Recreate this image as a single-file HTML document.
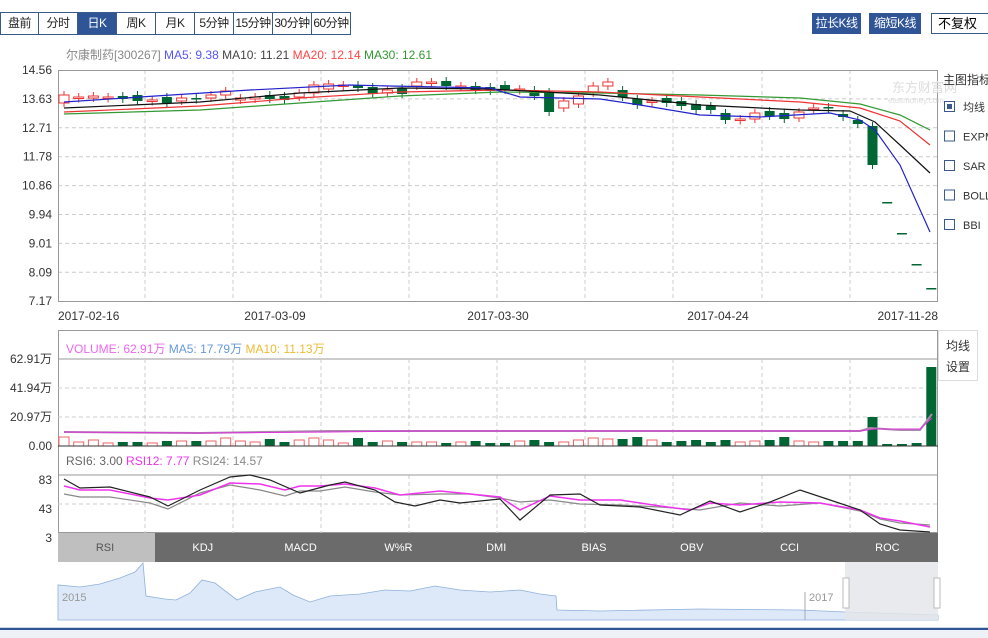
<!DOCTYPE html>
<html><head><meta charset="utf-8"><style>
body{margin:0;width:988px;height:638px;overflow:hidden;background:#fff;font-family:"Liberation Sans","Noto Sans CJK SC",sans-serif;}
.tab{position:absolute;top:12px;height:21px;border:1px solid #3b5a8c;display:flex;}
.tab div{border-right:1px solid #3b5a8c;font-size:12px;line-height:21px;text-align:center;color:#222;white-space:nowrap;overflow:hidden;letter-spacing:-0.5px}
.tab div:last-child{border-right:none}
.btn{position:absolute;top:13px;height:21px;background:#2f5597;color:#fff;font-size:12px;line-height:21px;text-align:center;white-space:nowrap;letter-spacing:-0.5px}
svg text{font-family:"Liberation Sans","Noto Sans CJK SC",sans-serif;}
</style></head><body>
<div class="tab" style="left:0">
<div style="width:37px">盘前</div><div style="width:38px">分时</div><div style="width:38px;background:#2f5597;color:#fff">日K</div><div style="width:38px">周K</div><div style="width:38px">月K</div><div style="width:38px">5分钟</div><div style="width:38px">15分钟</div><div style="width:38px">30分钟</div><div style="width:38px">60分钟</div>
</div>
<div class="btn" style="left:812px;width:49px">拉长K线</div>
<div class="btn" style="left:869px;width:52px">缩短K线</div>
<div style="position:absolute;left:931px;top:13px;width:60px;height:19px;border:1px solid #3b5a8c;font-size:13px;line-height:19px;padding-left:6px;white-space:nowrap">不复权</div>
<svg id="s" width="988" height="638" style="position:absolute;left:0;top:0"></svg>
<script>
(function(){
var s='';
function L(x1,y1,x2,y2,c,w,d){s+='<line x1="'+x1+'" y1="'+y1+'" x2="'+x2+'" y2="'+y2+'" stroke="'+c+'" stroke-width="'+(w||1)+'"'+(d?' stroke-dasharray="4,3"':'')+'/>';}
function T(x,y,t,c,sz,a){s+='<text x="'+x+'" y="'+y+'" fill="'+c+'" font-size="'+(sz||12)+'"'+(a?' text-anchor="'+a+'"':'')+'>'+t+'</text>';}
function P(pts,c,w){s+='<polyline fill="none" stroke="'+c+'" stroke-width="'+(w||1.2)+'" points="'+pts+'"/>';}
var X0=58,X1=938,vx=[145,233,321,409,497,585,673,762,850];
s+='<text x="66" y="59" font-size="12"><tspan fill="#888">尔康制药[300267]</tspan><tspan fill="#55f"> MA5: 9.38</tspan><tspan fill="#444"> MA10: 11.21</tspan><tspan fill="#f44"> MA20: 12.14</tspan><tspan fill="#393"> MA30: 12.61</tspan></text>';
var lab=['14.56','13.63','12.71','11.78','10.86','9.94','9.01','8.09','7.17'];
for(var i=0;i<9;i++){var y=70+i*28.9;T(52,y+4,lab[i],'#333',12,'end');if(i>0&&i<8)L(X0,y,X1,y,'#ccc',1,1);}
vx.forEach(function(x){L(x,70,x,301,'#ccc',1,1)});
s+='<rect x="58.5" y="70.5" width="879" height="231" fill="none" stroke="#999"/>';
T(892,92,'东方财富网','#ddd',13);T(888,103,'eastmoney.com','#ddd',8);
var c=[[103,95],[97,97],[98,96],[97,97],[96,99],[95,101],[100,100],[97,103],[101,98],[98,99],[98,95],[95,91],[100,98],[99,97],[95,99],[96,100],[97,93],[93,85],[89,84],[85,85],[85,88],[87,94],[93,90],[88,94],[86,82],[82,82],[81,86],[86,86],[86,90],[87,91],[85,90],[89,89],[90,96],[92,112],[108,101],[104,96],[93,86],[86,82],[90,97],[99,105],[101,101],[98,103],[101,106],[104,110],[106,110],[113,120],[119,119],[119,113],[111,116],[113,119],[118,112],[108,108],[107,108],[114,117],[120,124],[126,165],[202,202],[233,233],[264,264],[288,288]];
for(var i=0;i<c.length;i++){var x=64+i*14.7,o=c[i][0],cl=c[i][1],up=cl<=o;if(i>=55)up=false;var col=up?'#e33':'#063';
var tp=Math.min(o,cl),h=Math.max(Math.abs(o-cl),1.5);
if(i<56)L(x,tp-4,x,tp+h+4,col);
if(up)s+='<rect x="'+(x-5)+'" y="'+tp+'" width="10" height="'+h+'" fill="#fff" stroke="'+col+'"/>';else s+='<rect x="'+(x-5)+'" y="'+tp+'" width="10" height="'+h+'" fill="'+col+'"/>';}
P('64,114 200,110 300,103 400,96 500,92 600,93 700,95 800,98 860,104 900,115 930,130','#393');
P('64,112 200,106 300,98 400,92 500,90 600,92 700,97 800,102 860,108 900,121 930,145','#e33');
P('64,108 200,102 300,93 400,88 490,89 600,95 700,105 800,110 850,111 875,122 900,145 930,173','#111');
P('64,102 140,97 250,90 350,85 390,86 490,88 520,97 560,98 600,99 640,105 700,115 760,117 830,113 860,120 875,130 900,165 930,232','#22c');
T(943,84,'主图指标','#333',12);
var leg=['均线','EXPMA','SAR','BOLL','BBI'];
for(var i=0;i<5;i++){var y=101+i*29.5;s+='<rect x="944.5" y="'+(y+0.5)+'" width="10" height="10" fill="#fff" stroke="#3b5a8c"/>';if(i==0)s+='<rect x="947" y="'+(y+3)+'" width="5" height="5" fill="#3b5a8c"/>';s+='<text x="963" y="'+(y+10)+'" fill="#333" font-size="11" font-family="Liberation Serif">'+leg[i]+'</text>';}
T(58,320,'2017-02-16','#333',12);T(275,320,'2017-03-09','#333',12,'middle');T(498,320,'2017-03-30','#333',12,'middle');T(718,320,'2017-04-24','#333',12,'middle');T(938,320,'2017-11-28','#333',12,'end');
s+='<rect x="58.5" y="330.5" width="879" height="202" fill="none" stroke="#999"/>';
s+='<rect x="938.5" y="330.5" width="39" height="50" fill="#fff" stroke="#ddd"/>';T(946,350,'均线','#333',12);T(946,371,'设置','#333',12);
s+='<text x="66" y="353" font-size="12"><tspan fill="#e6e">VOLUME: 62.91万</tspan><tspan fill="#69d"> MA5: 17.79万</tspan><tspan fill="#eb3"> MA10: 11.13万</tspan></text>';
L(X0,359,X1,359,'#999');
var vl=['62.91万','41.94万','20.97万','0.00'];
for(var i=0;i<4;i++){var y=359+i*29;T(52,y+4,vl[i],'#333',12,'end');if(i>0&&i<3)L(X0,y,X1,y,'#ccc',1,1);}
vx.forEach(function(x){L(x,359,x,446,'#ccc',1,1);L(x,475,x,533,'#ccc',1,1)});
var hv=[9,4,6,3,4,4,3,5,5,5,5,8,5,4,7,4,6,8,6,3,8,4,5,4,4,4,3,4,5,3,3,5,6,4,4,6,8,7,7,9,6,4,5,6,4,6,4,5,6,9,5,4,5,5,5,29,2,2,3,79];
for(var i=0;i<c.length;i++){var x=64+i*14.7,up=c[i][1]<=c[i][0];if(i>=55)up=false;var h=hv[i];var y=446-h;
if(up)s+='<rect x="'+(x-5)+'" y="'+y+'" width="10" height="'+h+'" fill="#fff" stroke="#e66"/>';else s+='<rect x="'+(x-5)+'" y="'+y+'" width="10" height="'+h+'" fill="#063"/>';}
L(X0,446,X1,446,'#333');
P('64,432 200,433 330,431 420,431 600,431 700,431 860,431 870,428 900,430 920,430 932,414','#a8a',2);
P('64,432 200,433 330,432 420,431 600,431 700,431 860,431 875,429 900,429 920,429 932,418','#d3d',1);
s+='<text x="66" y="465" font-size="12"><tspan fill="#666">RSI6: 3.00</tspan><tspan fill="#e3e"> RSI12: 7.77</tspan><tspan fill="#888"> RSI24: 14.57</tspan></text>';
L(X0,475,X1,475,'#999');L(X0,504,X1,504,'#ccc',1,1);
T(52,484,'83','#333',12,'end');T(52,513,'43','#333',12,'end');T(52,542,'3','#333',12,'end');
P('64,494 80,497 110,497 150,503 168,509 200,493 230,485 260,490 285,496 300,491 320,491 345,487 375,492 400,495 440,494 470,494 500,498 520,502 550,500 580,504 620,505 660,507 700,510 740,503 780,506 820,503 860,511 880,519 900,523 930,525','#888',1.2);
P('64,486 80,490 110,490 150,498 168,500 200,495 230,483 260,484 285,490 300,486 320,486 345,484 375,488 400,495 440,491 470,494 500,497 520,510 550,496 580,500 620,500 660,506 690,510 710,503 740,505 780,502 820,503 860,510 880,518 900,521 930,527','#e3e',1.5);
P('64,479 80,488 110,487 150,497 168,506 200,490 230,477 250,475 270,480 300,493 330,485 345,482 375,490 395,502 415,506 440,500 460,503 500,499 520,520 550,495 580,494 600,505 640,507 680,515 710,501 740,512 770,502 800,490 830,500 860,510 880,524 900,530 930,532','#222',1.2);
s+='<rect x="58" y="533" width="880" height="29" fill="#6b6b6b"/><rect x="58" y="533" width="97" height="29" fill="#bfbfbf"/>';
var tb=['RSI','KDJ','MACD','W%R','DMI','BIAS','OBV','CCI','ROC'];
for(var i=0;i<9;i++)s+='<text x="'+(105+i*97.8)+'" y="551" text-anchor="middle" font-size="11" font-family="Liberation Serif" fill="'+(i?'#fff':'#555')+'">'+tb[i]+'</text>';
s+='<path d="M58,620 L58,585 80,587 100,584 120,578 135,572 143,563 146,596 165,599 176,600 190,593 202,580 215,583 237,600 255,592 280,587 293,595 310,602 330,596 360,594 385,590 410,591 435,586 460,590 490,592 520,590 540,594 556,596 557,610 600,611 700,609 800,610 845,612 938,615 938,620 Z" fill="#dde9f8" stroke="#8fb0dc" stroke-width="0.8"/>';
s+='<rect x="845" y="562" width="93" height="58" fill="#e4e6ea" opacity="0.85"/>';
s+='<rect x="843" y="578" width="6" height="30" fill="#fff" stroke="#bbb"/><rect x="934" y="578" width="6" height="30" fill="#fff" stroke="#bbb"/>';
L(805,592,805,620,'#aaa');T(62,601,'2015','#999',11);T(809,601,'2017','#999',11);
L(0,629,988,629,'#2f5597',2.5);s+='<rect x="0" y="630" width="988" height="8" fill="#eef2f6"/>';
document.getElementById('s').innerHTML=s;
})();
</script>
</body></html>
